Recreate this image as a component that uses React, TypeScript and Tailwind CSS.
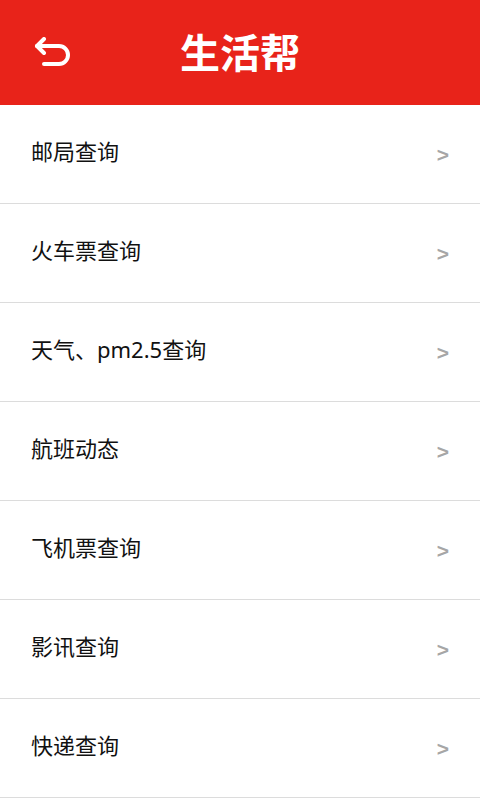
const items = [
  "邮局查询",
  "火车票查询",
  "天气、pm2.5查询",
  "航班动态",
  "飞机票查询",
  "影讯查询",
  "快递查询",
];

function BackIcon() {
  return (
    <svg
      aria-hidden="true"
      viewBox="0 0 40 32"
      className="h-[32px] w-[40px]"
      fill="none"
      stroke="white"
      strokeWidth="4"
      strokeLinecap="round"
      strokeLinejoin="round"
    >
      <path d="M5 9h22a9 9 0 0 1 0 18H12" />
      <path d="M12 2L5 9l7 7" />
    </svg>
  );
}

export default function App() {
  return (
    <div className="min-h-screen bg-white font-['Noto_Sans','Noto_Sans_CJK_SC',sans-serif]">
      <div className="relative flex h-[105px] items-center justify-center bg-[#e8231a]">
        <div className="absolute left-[32px] top-[37px]">
          <BackIcon />
        </div>
        <h1 className="text-[40px] font-bold leading-none text-white">生活帮</h1>
      </div>

      <div>
        {items.map((label) => (
          <div
            key={label}
            className="flex h-[99px] items-center justify-between border-b border-[#dcdcdc] pl-[31px] pr-[31px]"
          >
            <span className="mb-[5px] text-[22px] text-[#111]">{label}</span>
            <span className="mt-[2px] font-['Liberation_Sans',sans-serif] text-[21px] font-bold text-[#a6a6a6]">
              &gt;
            </span>
          </div>
        ))}
      </div>
    </div>
  );
}
